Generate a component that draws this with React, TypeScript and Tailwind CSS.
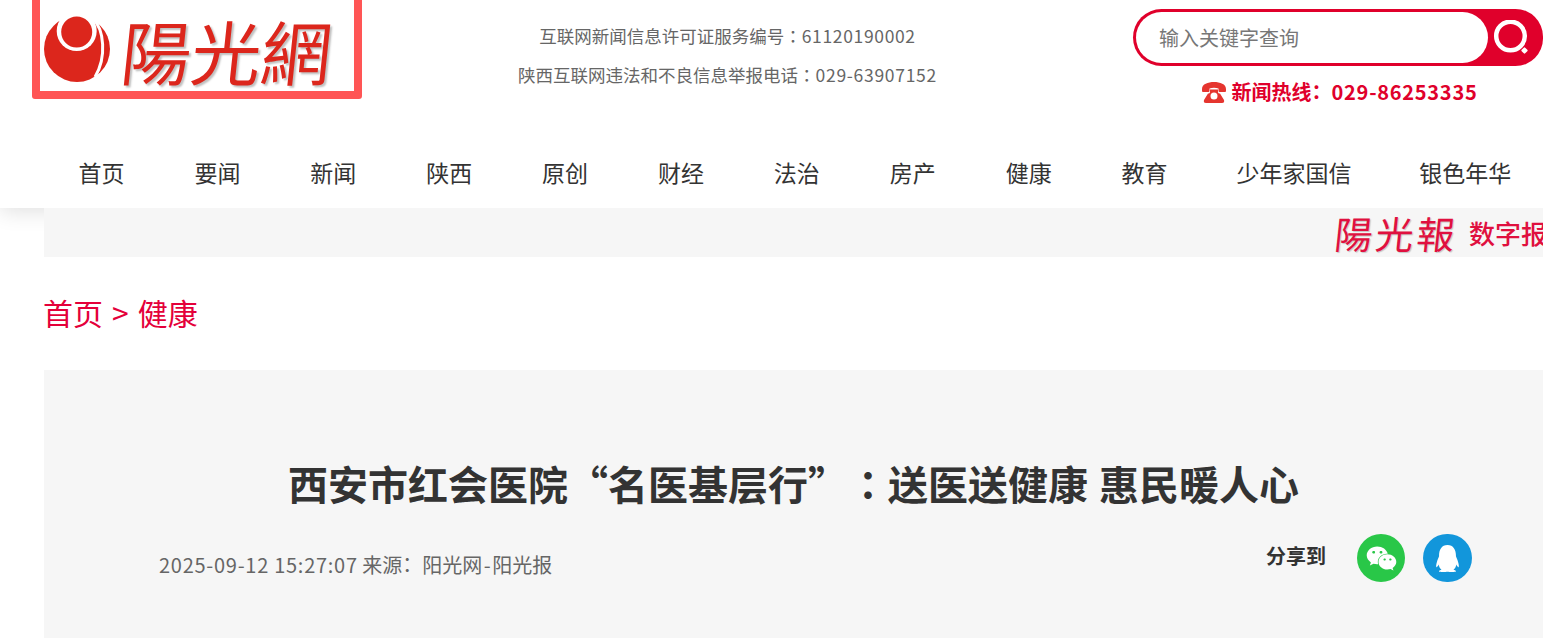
import { FaQq, FaWeixin } from "react-icons/fa";

const font = { fontFamily: '"Noto Sans CJK SC", "Noto Sans", sans-serif' };

const navItems = [
  { label: "首页" },
  { label: "要闻" },
  { label: "新闻" },
  { label: "陕西" },
  { label: "原创" },
  { label: "财经" },
  { label: "法治" },
  { label: "房产" },
  { label: "健康" },
  { label: "教育" },
  { label: "少年家国信", className: "ml-[-1px]" },
  { label: "银色年华", className: "ml-[-2px]" },
];

// the colon sits mid-height and left of centre in the reference
function Colon() {
  return <span className="inline-block w-[1em] font-['Noto_Sans_CJK_TC'] [font-feature-settings:'halt'] [text-spacing-trim:normal]">：</span>;
}

function Emblem() {
  return (
    <svg width="68" height="68" viewBox="0 0 68 68" className="shrink-0">
      <circle cx="33" cy="33" r="33" fill="#dc261c" />
      <circle cx="32.700" cy="15" r="20" fill="#fff" />
      <path d="M12 0 L54 0 L50 4 L14 4 Z" fill="#fff" />
      <circle cx="32.700" cy="16" r="15.500" fill="#dc261c" />
      <path d="M49 3 C60 13 63 41 51 61" fill="none" stroke="#fff" strokeWidth="3" />
    </svg>
  );
}

function PhoneIcon() {
  return (
    <svg width="24" height="21" viewBox="0 0 24 21" className="shrink-0">
      <path d="M0 7 C0 2 6 0 12 0 C18 0 24 2 24 7 L24 9 C24 10 23 10 22 10 L18 10 C17 10 16.500 9.500 16.500 8.500 L16.500 6.500 C14 5.500 10 5.500 7.500 6.500 L7.500 8.500 C7.500 9.500 7 10 6 10 L2 10 C1 10 0 10 0 9 Z" fill="#e5352f" />
      <path fillRule="evenodd" d="M8 7.500 L16 7.500 L16 10 C16 11 17 11.500 18 11.500 L22 18 C22.500 20 22 21 20 21 L4 21 C2 21 1.500 20 2 18 L6 11.500 C7 11.500 8 11 8 10 Z M12 10.500 A3.500 3.500 0 1 0 12 17.500 A3.500 3.500 0 1 0 12 10.500 Z" fill="#e5352f" />
    </svg>
  );
}

function SearchIcon() {
  return (
    <svg width="36" height="36" viewBox="0 0 36 36">
      <circle cx="18.500" cy="16" r="14.300" fill="none" stroke="#fff" strokeWidth="4.500" />
      <rect x="30" y="28" width="5" height="5" rx="1" fill="#fff" transform="rotate(45 32.500 30.500)" />
    </svg>
  );
}

export default function App() {
  return (
    <div className="h-[638px] w-[1543px] overflow-hidden bg-white text-[#333]" style={font}>
      <header className="relative h-[208px] bg-white shadow-[0_4px_20px_rgba(0,0,0,0.12)]">
        <div className="flex h-[130px] items-start">
          <a className="ml-[32px] mt-[-8px] flex h-[107px] w-[330px] shrink-0 items-center rounded-[3px] border-[8px] border-[#ff5555] pl-[4px] pt-[9px]">
            <Emblem />
            <span className="ml-[10px] -skew-x-6 whitespace-nowrap text-[70px] leading-none text-[#dc261c] [text-shadow:2px_2px_2px_rgba(0,0,0,0.25)]">
              陽光網
            </span>
          </a>
          <div className="ml-[156px] mt-[16px] w-[419px] shrink-0 whitespace-nowrap text-center text-[17.5px] leading-[39px] text-[#666]">
            <p>
              互联网新闻信息许可证服务编号<Colon />
              <span className="tracking-[0.65px]">61120190002</span>
            </p>
            <p>
              陕西互联网违法和不良信息举报电话<Colon />
              <span className="tracking-[0.7px]">029-63907152</span>
            </p>
          </div>
          <div className="ml-[196px] mt-[9px] w-[410px] shrink-0">
            <div className="flex h-[57px] rounded-l-[29px] rounded-r-[28px] bg-[#e0002b] p-[3px] pr-0">
              <div className="flex h-[51px] w-[352px] items-center rounded-[26px] bg-white pl-[23px] text-[20px] text-[#777]">
                输入关键字查询
              </div>
              <div className="flex flex-1 items-center pl-[4px]">
                <SearchIcon />
              </div>
            </div>
            <div className="mt-[14px] flex items-center justify-center gap-[6px] pl-[3px] text-[20px] font-bold leading-[24px] text-[#e0002b]">
              <PhoneIcon />
              <span className="whitespace-nowrap">
                新闻热线<Colon />
                <span className="tracking-[0.72px]">029-86253335</span>
              </span>
            </div>
          </div>
        </div>
        <nav className="ml-[78.500px] flex gap-[69.900px] whitespace-nowrap pt-[25px] text-[23px] leading-[34px]">
          {navItems.map((item) => (
            <a key={item.label} className={item.className}>
              {item.label}
            </a>
          ))}
        </nav>
      </header>

      <div className="relative ml-[44px] flex h-[49px] items-center justify-end overflow-hidden bg-[#f6f6f6]">
        <div className="flex w-[208px] shrink-0 items-center whitespace-nowrap text-[#e0103f]">
          <span className="-skew-x-6 text-[38px] leading-none tracking-[3px] [text-shadow:1px_1px_1px_rgba(0,0,0,0.2)]">陽光報</span>
          <span className="ml-[11px] text-[26px] font-medium">数字报</span>
        </div>
      </div>

      <div className="ml-[43px] flex h-[113px] items-center gap-[9px] pb-[2px] text-[30px] text-[#e4003a]">
        <a>首页</a>
        <span>&gt;</span>
        <a>健康</a>
      </div>

      <main className="ml-[44px] h-[268px] bg-[#f6f6f6] pt-[84px]">
        <h1 className="text-center text-[40px] font-bold leading-[58px] text-[#333] [text-spacing-trim:space-all] [word-spacing:2px]">
          西安市红会医院“名医基层行”<Colon />送医送健康 惠民暖人心
        </h1>
        <div className="mt-[22px] flex items-start pl-[115px] pr-[71px]">
          <p className="mt-[16px] flex-1 text-[20px] leading-[30px] text-[#666]">
            <span className="tracking-[0.73px]">2025-09-12 15:27:07</span> 来源<Colon />阳光网<span className="px-[1.500px]">-</span>阳光报
          </p>
          <span className="mr-[31px] mt-[7px] text-[20px] font-bold leading-[30px] text-[#333]">分享到</span>
          <div className="flex gap-[18px]">
            <a className="flex h-[48px] w-[48px] items-center justify-center rounded-full bg-[#29c748] text-[31px] text-white">
              <FaWeixin />
            </a>
            <a className="flex h-[48px] w-[49px] items-center justify-center rounded-full bg-[#1296db] text-[27px] text-white">
              <FaQq />
            </a>
          </div>
        </div>
      </main>
    </div>
  );
}
